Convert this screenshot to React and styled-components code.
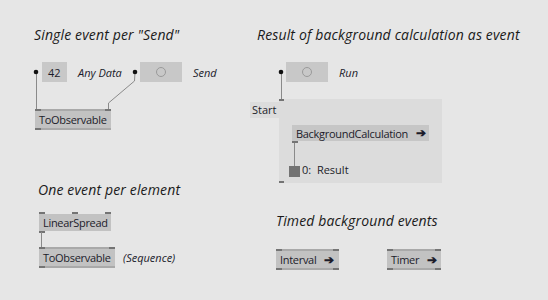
import React from "react";
import styled, { createGlobalStyle } from "styled-components";

const GlobalStyle = createGlobalStyle`
  html, body {
    margin: 0;
    padding: 0;
    background: #e6e6e6;
  }
`;

const Canvas = styled.div`
  position: relative;
  width: 548px;
  height: 300px;
  overflow: hidden;
  background: #e6e6e6;
  font-family: "Open Sans", "Noto Sans", sans-serif;
  color: #1c1c2a;
`;

const Wires = styled.svg`
  position: absolute;
  left: 0;
  top: 0;
  pointer-events: none;
`;

// things on the patch canvas sit at their own coordinates
const Spot = styled.div`
  position: absolute;
  left: ${p => p.$x}px;
  top: ${p => p.$y}px;
  display: flex;
  align-items: center;
  gap: ${p => p.$gap || 0}px;
`;

const Title = styled.div`
  font-size: 14px;
  font-style: italic;
  letter-spacing: 0.15px;
  color: #1a1a1a;
  white-space: nowrap;
`;

const Label = styled.span`
  font-size: 11px;
  font-style: italic;
  color: #1a1a2a;
  white-space: nowrap;
`;

const NodeBox = styled.div`
  position: relative;
  width: ${p => p.$w}px;
  height: ${p => p.$h || 21}px;
  box-sizing: border-box;
  background: ${p => p.$bg || "#c2c2c2"};
  border-top: 2px solid ${p => (p.$topStrip ? "#a9a9a9" : "transparent")};
  border-bottom: 2px solid ${p => (p.$bottomStrip ? "#a9a9a9" : "transparent")};
  background-clip: padding-box;
  display: flex;
  align-items: center;
  gap: 8px;
  padding: 0 4px;
  font-size: 11px;
  letter-spacing: -0.3px;
  white-space: nowrap;
`;

const Pin = styled.span`
  position: absolute;
  width: 6px;
  height: 2px;
  background: #747474;
  ${p => (p.$side === "top" ? "top: -2px;" : "bottom: -2px;")}
  ${p =>
    p.$at === "l"
      ? "left: 0;"
      : p.$at === "r"
      ? "right: 0;"
      : "left: calc(50% - 3px);"}
`;

const Arrow = styled.span`
  font-size: 12px;
  font-weight: bold;
  line-height: 1;
`;

function Node({ w, h, bg, top = [], bottom = [], topStrip, bottomStrip, children }) {
  return (
    <NodeBox $w={w} $h={h} $bg={bg} $topStrip={topStrip} $bottomStrip={bottomStrip}>
      {top.map(at => <Pin key={"t" + at} $side="top" $at={at} />)}
      {bottom.map(at => <Pin key={"b" + at} $side="bottom" $at={at} />)}
      {children}
    </NodeBox>
  );
}

const IOBox = styled.div`
  width: ${p => p.$w}px;
  height: 20px;
  background: #c8c8c8;
  display: flex;
  align-items: center;
  justify-content: ${p => (p.$center ? "center" : "flex-start")};
  padding-left: ${p => (p.$center ? 0 : 6)}px;
  box-sizing: border-box;
  font-size: 11px;
`;

const Bang = styled.span`
  width: 8px;
  height: 8px;
  border-radius: 50%;
  border: 1px solid #9a9a9a;
`;

const Region = styled.div`
  position: absolute;
  left: 279px;
  top: 99px;
  width: 163px;
  height: 84px;
  background: #dcdcdc;
`;

const RegionLabel = styled.div`
  position: absolute;
  left: 250px;
  top: 102px;
  width: 29px;
  height: 16px;
  background: #dcdcdc;
  font-size: 11px;
  line-height: 16px;
  padding-left: 2px;
  box-sizing: border-box;
`;

const RegionPin = styled.span`
  position: absolute;
  left: 0;
  width: 5px;
  height: 2px;
  background: #747474;
  ${p => (p.$bottom ? "bottom: 0;" : "top: 0;")}
`;

const OutSquare = styled.span`
  width: 11px;
  height: 11px;
  background: #737373;
  margin-top: 5px;
`;

const OutText = styled.span`
  font-size: 11px;
`;

const Dot = styled.circle`
  fill: #111;
`;

export default function App() {
  return (
    <>
      <GlobalStyle />
      <Canvas>
        <Spot $x={34} $y={25}><Title>Single event per "Send"</Title></Spot>
        <Spot $x={257} $y={25}><Title>Result of background calculation as event</Title></Spot>
        <Spot $x={38} $y={180}><Title>One event per element</Title></Spot>
        <Spot $x={276} $y={211}><Title>Timed background events</Title></Spot>

        <Spot $x={42} $y={62} $gap={11}>
          <IOBox $w={25}>42</IOBox>
          <Label>Any Data</Label>
        </Spot>
        <Spot $x={140} $y={62} $gap={11}>
          <IOBox $w={42} $center><Bang /></IOBox>
          <Label>Send</Label>
        </Spot>

        <Spot $x={35} $y={109}>
          <Node w={76} top={["l", "r"]} bottom={["l"]} topStrip bottomStrip>ToObservable</Node>
        </Spot>

        <Spot $x={286} $y={62} $gap={11}>
          <IOBox $w={42} $center><Bang /></IOBox>
          <Label>Run</Label>
        </Spot>

        <Region>
          <RegionPin />
          <RegionPin $bottom />
        </Region>
        <RegionLabel>Start</RegionLabel>

        <Spot $x={292} $y={123}>
          <Node w={137} h={20} bg="#c6c6c6" bottom={["l"]}>
            BackgroundCalculation <Arrow>➔</Arrow>
          </Node>
        </Spot>
        <Spot $x={289} $y={161} $gap={2}>
          <OutSquare />
          <OutText>0:&nbsp; Result</OutText>
        </Spot>

        <Spot $x={39} $y={212}>
          <Node w={72} top={["l", "c", "r"]} bottom={["l"]}>LinearSpread</Node>
        </Spot>
        <Spot $x={39} $y={247} $gap={8}>
          <Node w={76} top={["l", "r"]} bottom={["l"]} topStrip bottomStrip>ToObservable</Node>
          <Label>(Sequence)</Label>
        </Spot>

        <Spot $x={276} $y={249}>
          <Node w={63} top={["l", "r"]} bottom={["l", "r"]} topStrip bottomStrip>
            Interval <Arrow>➔</Arrow>
          </Node>
        </Spot>
        <Spot $x={387} $y={249}>
          <Node w={54} top={["l", "r"]} bottom={["l", "r"]} topStrip bottomStrip>
            Timer <Arrow>➔</Arrow>
          </Node>
        </Spot>

        <Wires width="548" height="300">
          <g stroke="#8a8a8a" strokeWidth="1" fill="none">
            <line x1="36.5" y1="72" x2="36.5" y2="109" />
            <polyline points="135,72 134.5,81 108.5,103 108.5,109" />
            <line x1="281.5" y1="72" x2="281.5" y2="99" />
            <line x1="294.5" y1="143" x2="294.5" y2="166" />
            <line x1="41.5" y1="232" x2="41.5" y2="247" />
          </g>
          <Dot cx="36" cy="72" r="2.3" />
          <Dot cx="135" cy="72" r="2.3" />
          <Dot cx="281" cy="72" r="2.3" />
        </Wires>
      </Canvas>
    </>
  );
}
